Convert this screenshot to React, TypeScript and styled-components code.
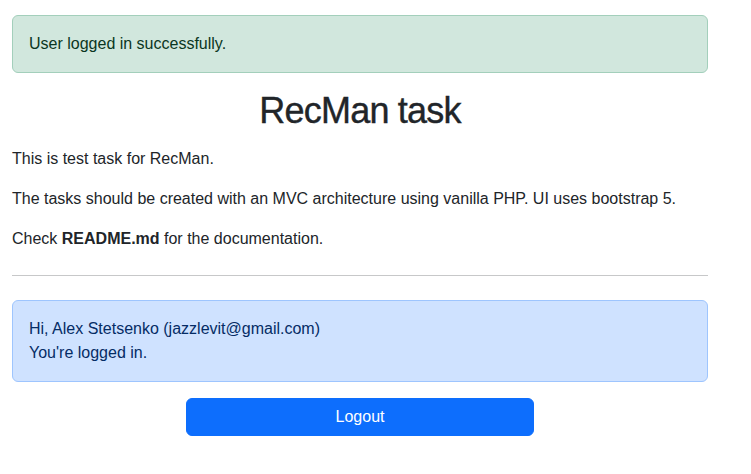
import React from 'react';
import styled, { createGlobalStyle } from 'styled-components';

const GlobalStyle = createGlobalStyle`
  * { box-sizing: border-box; }
  body {
    margin: 0;
    background: #fff;
    color: #212529;
    font-family: "Liberation Sans", Arial, sans-serif;
    font-size: 16px;
    line-height: 1.5;
  }
`;

const Container = styled.main`
  width: 720px;
  padding: 15px 12px 0 12px;
`;

const Alert = styled.div<{ variant: 'success' | 'primary' }>`
  padding: 16px;
  margin-bottom: 16px;
  border: 1px solid ${({ variant }) => (variant === 'success' ? '#a3cfbb' : '#9ec5fe')};
  border-radius: 6px;
  background-color: ${({ variant }) => (variant === 'success' ? '#d1e7dd' : '#cfe2ff')};
  color: ${({ variant }) => (variant === 'success' ? '#0a3622' : '#052c65')};
`;

const Title = styled.h1`
  margin: 0 0 15px 0;
  font-size: 36px;
  font-weight: 500;
  line-height: 1.2;
  letter-spacing: -0.8px;
  -webkit-text-stroke: 0.4px #212529;
  text-align: center;
`;

const Paragraph = styled.p`
  margin: 0 0 16px 0;

  strong {
    font-weight: 700;
  }
`;

const Divider = styled.hr`
  margin: 24px 0;
  border: 0;
  border-top: 1px solid #212529;
  opacity: 0.25;
`;

const ButtonRow = styled.div`
  display: flex;
  justify-content: center;
`;

const LogoutButton = styled.button`
  width: 348px;
  padding: 6px 12px;
  font-family: inherit;
  font-size: 16px;
  line-height: 1.5;
  color: #fff;
  background-color: #0d6efd;
  border: 1px solid #0d6efd;
  border-radius: 6px;
  cursor: pointer;
`;

export default function App() {
  return (
    <>
      <GlobalStyle />
      <Container>
        <Alert variant="success">User logged in successfully.</Alert>
        <Title>RecMan task</Title>
        <Paragraph>This is test task for RecMan.</Paragraph>
        <Paragraph>
          The tasks should be created with an MVC architecture using vanilla PHP. UI uses bootstrap 5.
        </Paragraph>
        <Paragraph>
          Check <strong>README.md</strong> for the documentation.
        </Paragraph>
        <Divider />
        <Alert variant="primary">
          Hi, Alex Stetsenko (jazzlevit@gmail.com)
          <br />
          You're logged in.
        </Alert>
        <ButtonRow>
          <LogoutButton>Logout</LogoutButton>
        </ButtonRow>
      </Container>
    </>
  );
}
